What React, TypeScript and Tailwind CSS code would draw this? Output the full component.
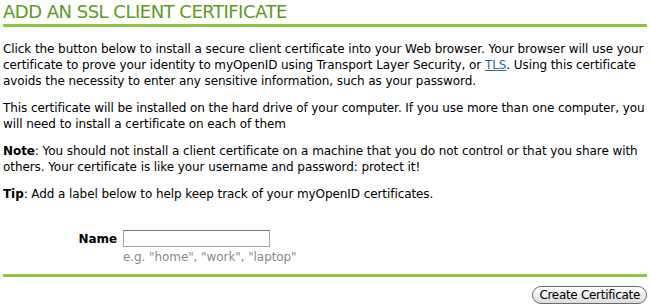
export default function App() {
  return (
    <div className="w-[650px] h-[305px] bg-white px-[3px] pt-[1px] text-[12px] leading-[16px] text-black font-['DejaVu_Sans',sans-serif] tracking-[-0.08px]">
      <h1 className="text-[18px] leading-[22px] text-[#5a9c1e] uppercase tracking-[-0.5px]">
        Add an SSL Client Certificate
      </h1>
      <div className="h-[3px] bg-[#8dc63f] mt-[1px]" />

      <div className="pt-[14px] flex flex-col gap-[11px]">
        <p>
          Click the button below to install a secure client certificate into your Web browser. Your browser will use your
          certificate to prove your identity to myOpenID using Transport Layer Security, or{" "}
          <a href="#" className="text-[#2f6a9e] underline">TLS</a>. Using this certificate avoids the necessity to enter any
          sensitive information, such as your password.
        </p>
        <p>
          This certificate will be installed on the hard drive of your computer. If you use more than one computer, you
          will need to install a certificate on each of them
        </p>
        <p>
          <b>Note</b>: You should not install a client certificate on a machine that you do not control or that you share with
          others. Your certificate is like your username and password: protect it!
        </p>
        <p>
          <b>Tip</b>: Add a label below to help keep track of your myOpenID certificates.
        </p>
      </div>

      <div className="mt-[28px] flex items-start gap-[6px]">
        <label className="w-[114px] text-right font-bold pt-[1px]">Name</label>
        <div className="flex flex-col gap-[2px]">
          <input className="w-[147px] h-[17px] border border-[#a5a5a5] border-t-[#777] bg-white outline-none" />
          <span className="text-[#8a8a8a]">e.g. "home", "work", "laptop"</span>
        </div>
      </div>

      <div className="h-[3px] bg-[#8dc63f] mt-[9px]" />

      <div className="flex justify-end pt-[9px]">
        <button className="h-[18px] px-[6px] rounded-full border border-[#6b6b6b] bg-gradient-to-b from-white to-[#dcdcdc] text-[12px] leading-[14px] tracking-[-0.3px]">
          Create Certificate
        </button>
      </div>
    </div>
  );
}
